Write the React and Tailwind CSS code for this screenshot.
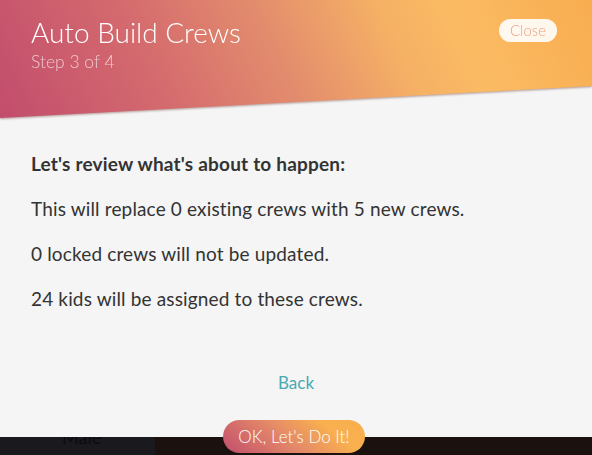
import React from 'react';

const lines = [
  'This will replace 0 existing crews with 5 new crews.',
  '0 locked crews will not be updated.',
  '24 kids will be assigned to these crews.',
];

const App = () => {
  return (
    <div className="relative h-[455px] w-full overflow-hidden bg-[#1b1210] font-['Lato','Noto_Sans',sans-serif]">
      {/* page behind the modal */}
      <div className="absolute left-0 top-0 h-full w-[155px] bg-[#1a1a1e]">
        <div className="absolute left-[62px] top-[424px] text-[18px] text-[#0b0b0e]">Male</div>
      </div>

      <div className="relative flex h-[437px] flex-col bg-[#f5f5f5]">
        <div className="drop-shadow-[0_1px_1px_rgba(90,40,30,0.45)]">
          <div className="h-[118px] bg-[linear-gradient(65deg,#c24d6d_0%,#d56c6e_28%,#e38d6d_48%,#f5b065_66%,#fbbb63_78%,#f8ac50_100%)] px-[31px] pt-[13px] [clip-path:polygon(0_0,100%_0,100%_86px,0_118px)]">
            <div className="flex items-start justify-between">
              <div>
                <h1 className="text-[28px] font-light leading-[38px] text-white">Auto Build Crews</h1>
                <div className="text-[17.5px] font-light leading-[22px] text-white/65">Step 3 of 4</div>
              </div>
              <button className="mr-[4px] mt-[6px] h-[23px] rounded-full bg-white/90 px-[11px] text-[15px] font-light leading-[23px] text-[#f0a181]">
                Close
              </button>
            </div>
          </div>
        </div>

        <div className="px-[31px] pt-[33px] text-[19px] leading-[26px] text-[#333]">
          <p className="font-bold tracking-[0.2px]">Let's review what's about to happen:</p>
          {lines.map(t => (
            <p key={t} className="mt-[19px] tracking-[0.15px]">{t}</p>
          ))}
        </div>

        <div className="mt-[58px] text-center text-[17px] text-[#4aa9b2]">Back</div>
      </div>

      <button className="absolute left-[223px] top-[420px] h-[33px] w-[142px] rounded-full bg-[linear-gradient(40deg,#c24d6c_0%,#e48a68_45%,#f9b04e_75%,#f8ae4c_100%)] text-[17px] font-light leading-[33px] text-white">
        OK, Let's Do It!
      </button>
    </div>
  );
};

export default App;
